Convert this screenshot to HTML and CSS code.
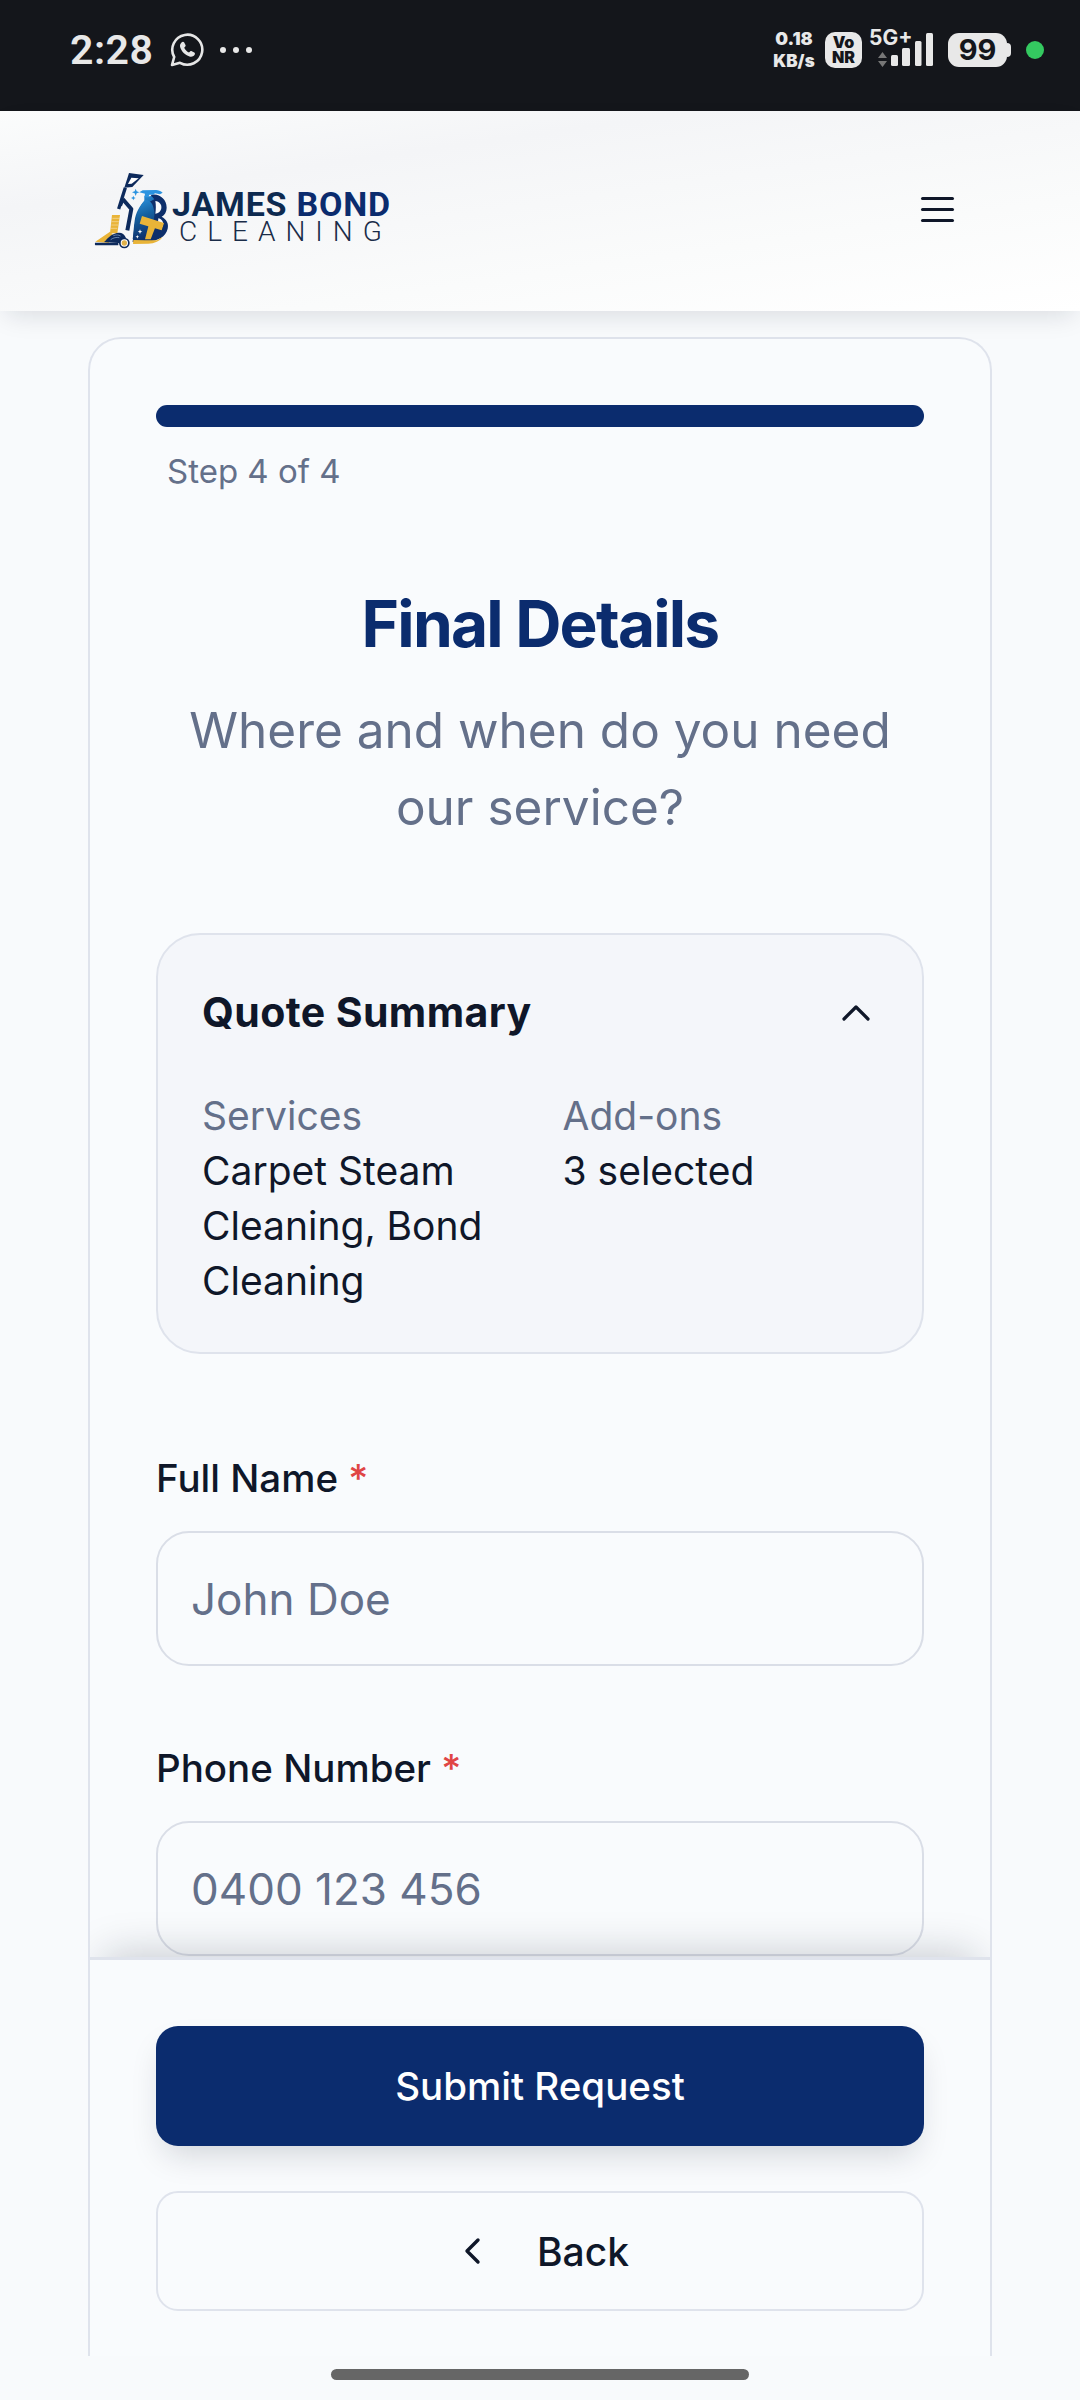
FILE: index.html
```html
<!DOCTYPE html>
<html lang="en">
<head>
<meta charset="utf-8">
<title>James Bond Cleaning - Final Details</title>
<link rel="stylesheet" href="styles.css">
</head>
<body>
<div class="page">
  <div class="status">
    <div class="status-left">
      <span class="time">2:28</span>
      <svg class="wa" viewBox="0 0 34 34"><path d="M2 32l2.2-8A15 15 0 1 1 10 29.8z" fill="none" stroke="#e6e6e6" stroke-width="2.6" stroke-linejoin="round"/><path d="M11.5 9.5c1-1 2.200-.8 2.700 0l1.300 2.500c.3.700.1 1.200-.4 1.800l-.9 1c1 2.100 2.600 3.700 4.800 4.800l1.100-1.100c.5-.5 1.100-.6 1.700-.3l2.500 1.300c.8.500.9 1.500.2 2.500-1.200 1.600-3.100 2-5 1.400-4.400-1.400-8-4.800-9.300-9.200-.5-1.700-.2-3.200 1.300-4.700z" fill="#e6e6e6"/></svg>
      <span class="dots"><i></i><i></i><i></i></span>
    </div>
    <div class="status-right">
      <span class="speed"><b>0.18</b><b>KB/s</b></span>
      <span class="vonr"><b>Vo</b><b>NR</b></span>
      <span class="net">
        <span class="fiveg">5G+</span>
        <svg class="signal" viewBox="0 0 64 40"><path d="M9 28l4.500-6 4.500 6zM9 31l4.500 6 4.500-6z" fill="#777"/><rect x="22" y="25" width="7" height="11" rx="1.500" fill="#e8e8e8"/><rect x="33" y="18" width="8" height="18" rx="1.500" fill="#e8e8e8"/><rect x="46" y="11" width="6.500" height="25" rx="1.500" fill="#e8e8e8"/><rect x="57" y="3" width="7" height="33" rx="1.500" fill="#e8e8e8"/></svg>
      </span>
      <span class="battery"><span class="battery-level">99</span><i class="battery-nub"></i></span>
      <i class="green-dot"></i>
    </div>
  </div>

  <header class="topbar">
    <div class="logo">
      <svg class="logo-mark" viewBox="0 0 255 270">
        <defs>
          <linearGradient id="bottle" x1="0" y1="0" x2="0.2" y2="1">
            <stop offset="0" stop-color="#2b93e0"/>
            <stop offset=".45" stop-color="#15609f"/>
            <stop offset="1" stop-color="#0d2f6b"/>
          </linearGradient>
        </defs>
        <path d="M103 68L117 24 161 30 127 66z" fill="#0d2a5c"/>
        <path d="M124 38L146 40 125 56 114 57z" fill="#fff"/>
        <path d="M106 68L96 100 86 132" fill="none" stroke="#0d2a5c" stroke-width="10"/>
        <path d="M98 102L124 132 112 196" fill="none" stroke="#0d2a5c" stroke-width="12" stroke-linejoin="round"/>
        <path d="M92 122L100 102" fill="none" stroke="#0d2a5c" stroke-width="8"/>
        <path d="M66 150h24l-8 55H60z" fill="#e9b438"/>
        <path d="M67 160h22M65 170h22M64 180h20M62 190h20" stroke="#fff" stroke-width="1.600" opacity=".7"/>
        <path d="M16 230l44-30 8 8-12 26z" fill="#e9b438"/>
        <path d="M42 231c8-6 14-18 30-24 16-7 30-4 36 12l-14 16z" fill="#0d2a5c"/>
        <path d="M62 224c8-6 18-8 26-6M70 212c8-3 16-3 22 1" fill="none" stroke="#8fb0d8" stroke-width="2"/>
        <path d="M15 233h70v8H18c-3 0-4-2-3-8z" fill="#0d2a5c"/>
        <circle cx="103" cy="234" r="16" fill="#0d2a5c"/>
        <circle cx="103" cy="234" r="11" fill="#fff"/>
        <circle cx="103" cy="234" r="8" fill="#dfb14a"/>
        <path d="M184 90c22-6 46 12 46 38 0 12-6 22-15 27 14 8 22 20 18 36-5 24-30 37-58 38l-47 1c2-10 3-22 4-36 2-24 14-48 30-62z" fill="#0d2f6b"/>
        <path d="M163 94h22l8 9c-20 8-34 26-40 50-4 20-8 44-12 62l-13 8c3-20 3-38 6-56 3-24 15-44 29-60z" fill="url(#bottle)"/>
        <path d="M165 105c18 0 24 12 28 34 2 16-3 30-8 45l-16 42-41 4c4-18 3-38 8-60 5-26 14-48 29-65z" fill="url(#bottle)"/>
        <path d="M148 82l10-6 40-1c7 0 14 3 20 8l-8 5-15-3-6 4h-11l-3 8h-12l2-11z" fill="#2b93e0"/>
        <path d="M196 108c12 2 20 10 18 22-2 10-10 16-18 16 2-12 2-26 0-38z" fill="#f8fafc"/>
        <path d="M205 160c9 2 16 10 14 20l-2 6-14-3z" fill="#f8fafc"/>
        <path d="M156 153l66 21-7 22-66-20z" fill="#e9b438"/>
        <path d="M176 181l20 6-14 36h-17z" fill="#e9b438"/>
        <path d="M130 225l35 1h36l16-10c-6 12-24 20-42 20l-46 1z" fill="#e9b438"/>
        <path d="M137 71l3 8 8 3-8 3-3 8-3-8-8-3 8-3zM130 92l2 5 5 2-5 2-2 5-2-5-5-2 5-2z" fill="#2b93e0"/>
        <path d="M150 193l2 5 5 2-5 2-2 5-2-5-5-2 5-2zM142 210l1.500 4 4 1.500-4 1.500-1.500 4-1.500-4-4-1.500 4-1.500z" fill="#fff"/>
      </svg>
      <div class="logo-words">
        <span class="logo-top"><span class="logo-james">JAMES</span> <span class="logo-bond">BOND</span></span>
        <span class="logo-bottom">CLEANING</span>
      </div>
    </div>
    <button class="menu-btn" aria-label="Menu"><i></i><i></i><i></i></button>
  </header>

  <main class="content">
    <section class="card">
      <div class="scroll">
        <div class="progress"></div>
        <p class="step">Step 4 of 4</p>
        <h1 class="title">Final Details</h1>
        <p class="subtitle">Where and when do you need our service?</p>

        <div class="summary">
          <div class="summary-head">
            <h2 class="summary-title">Quote Summary</h2>
            <svg class="chev-up" viewBox="0 0 30 17"><path d="M3 15L15 3l12 12" fill="none" stroke="#0f1729" stroke-width="3.200" stroke-linecap="round" stroke-linejoin="round"/></svg>
          </div>
          <div class="summary-grid">
            <div><div class="muted">Services</div><div>Carpet Steam Cleaning, Bond Cleaning</div></div>
            <div><div class="muted">Add-ons</div><div>3 selected</div></div>
          </div>
        </div>

        <div class="field">
          <label class="label">Full Name <span class="req">*</span></label>
          <div class="input">John Doe</div>
        </div>
        <div class="field">
          <label class="label">Phone Number <span class="req">*</span></label>
          <div class="input">0400 123 456</div>
        </div>
      </div>
      <div class="actions">
        <button class="btn btn-primary">Submit Request</button>
        <button class="btn btn-back">
          <svg class="chev-left" viewBox="0 0 18 28"><path d="M15 3L4 14l11 11" fill="none" stroke="#0f1729" stroke-width="3.400" stroke-linecap="round" stroke-linejoin="round"/></svg>
          Back
        </button>
      </div>
    </section>
  </main>

  <div class="gesture"><i class="home"></i></div>
</div>
</body>
</html>
```

FILE: styles.css
```css
* { box-sizing: border-box; }
html, body { margin: 0; padding: 0; }
body { font-family: "Inter", "Liberation Sans", sans-serif; color: #0f1729; background: #f8fafc; }
.page { width: 1080px; height: 2400px; display: flex; flex-direction: column; overflow: hidden; background: #f8fafc; }

.status { height: 111px; flex: none; background: #14161b; color: #e8e8e8; display: flex; justify-content: space-between; align-items: flex-start; padding: 29px 36px 0 70px; }
.status-left { display: flex; align-items: center; height: 42px; }
.time { font: 600 41px/42px "Roboto", sans-serif; letter-spacing: .5px; width: 100px; }
.wa { width: 34px; height: 34px; }
.dots { display: flex; gap: 7px; margin-left: 16px; }
.dots i { width: 6px; height: 6px; border-radius: 50%; background: #e8e8e8; }
.status-right { display: flex; align-items: center; height: 42px; }
.speed { display: flex; flex-direction: column; align-items: center; font: 700 17px/23px "Inter", sans-serif; width: 44px; }
.speed b:first-child { font-size: 18px; }
.vonr { width: 37px; height: 36px; margin-left: 9px; border-radius: 10px; background: #e8e8e8; color: #14161b; display: flex; flex-direction: column; align-items: center; justify-content: center; font: 700 16px/15px "Inter", sans-serif; }
.net { width: 70px; height: 42px; margin-left: 7px; display: flex; flex-direction: column; }
.fiveg { font: 700 21px/20px "Inter", sans-serif; margin-top: -1px; height: 1px; overflow: visible; }
.signal { width: 64px; height: 40px; margin-top: 1px; margin-left: 0; }
.battery { display: flex; align-items: center; margin-left: 9px; }
.battery-level { width: 59px; height: 34px; border-radius: 11px; background: #e8e8e8; color: #14161b; font: 700 29px/34px "Inter", sans-serif; text-align: center; }
.battery-nub { width: 4px; height: 14px; border-radius: 0 4px 4px 0; background: #e8e8e8; }
.green-dot { width: 18px; height: 18px; margin-left: 15px; border-radius: 50%; background: #34c960; }

.topbar { height: 200px; flex: none; background: linear-gradient(172deg, #fbfcfc 0%, #f4f5f7 28%, #fafbfb 68%, #fff 100%); box-shadow: 0 10px 24px -6px rgba(15, 23, 41, .13); display: flex; align-items: center; justify-content: space-between; padding: 0 126px 0 95px; position: relative; }
.logo { display: flex; align-items: center; margin-top: -2px; }
.logo-mark { width: 85px; height: 90px; margin: 0 -3px 0 -5px; flex: none; }
.logo-words { display: flex; flex-direction: column; position: relative; margin-top: 15px; }
.logo-top { font: 700 34px/28px "Roboto", sans-serif; letter-spacing: .8px; white-space: nowrap; }
.logo-james { color: #0d2a50; }
.logo-bond { color: #0b2c6e; }
.logo-bottom { font: 300 28px/28px "Roboto", sans-serif; letter-spacing: 10px; color: #1a2c48; margin-left: 7px; white-space: nowrap; }
.menu-btn { border: 0; padding: 0; background: none; display: flex; flex-direction: column; gap: 8px; width: 33px; margin-top: -3px; }
.menu-btn i { display: block; height: 3px; border-radius: 2px; background: #0f1729; }

.content { flex: 1; min-height: 0; padding: 26px 88px 0; overflow: hidden; }
.card { height: 100%; border: 2px solid #dfe3ec; border-bottom: 0; border-radius: 33px 33px 0 0; background: #f9fbfd; display: flex; flex-direction: column; overflow: hidden; }
.scroll { flex: 1; min-height: 0; overflow: hidden; padding: 66px 66px 0; }
.progress { height: 22px; border-radius: 11px; background: #0b2c6e; }
.step { margin: 22px 0 0 11px; font-size: 33px; line-height: 44px; color: #64708a; }
.title { margin: 87px 0 0; text-align: center; font: 700 64px/88px "Inter", sans-serif; letter-spacing: -1.800px; color: #0b2c6e; }
.subtitle { margin: 24px 0 0; text-align: center; font-size: 49.500px; line-height: 77px; color: #64708a; }

.summary { margin-top: 87px; height: 421px; border: 2px solid #dfe3ec; border-radius: 44px; background: #f4f6fa; padding: 44px 44px; }
.summary-head { display: flex; justify-content: space-between; align-items: center; height: 66px; }
.summary-title { margin: 0; font: 700 41px/66px "Inter", sans-serif; letter-spacing: .4px; color: #0f1729; }
.chev-up { width: 30px; height: 17px; margin-right: 7px; }
.summary-grid { display: grid; grid-template-columns: 1fr 1fr; gap: 45px; margin-top: 43px; font-size: 39px; line-height: 55px; font-weight: 400; }
.muted { color: #64708a; }

.field { margin-top: 75px; }
.summary + .field { margin-top: 97px; }
.label { display: block; font-size: 38.500px; line-height: 55px; font-weight: 500; }
.req { color: #e04545; }
.input { height: 135px; margin-top: 25px; border: 2px solid #dadee7; border-radius: 33px; background: #f9fbfd; padding: 0 33px; display: flex; align-items: center; font-size: 44px; color: #64708a; }

.actions { flex: none; position: relative; border-top: 3px solid #dfe3ec; background: #f9fbfd; padding: 66px 66px 45px; display: flex; flex-direction: column; gap: 45px; box-shadow: 0 -16px 40px -14px rgba(15, 23, 41, .22); }
.btn { height: 120px; border-radius: 22px; font: 500 38.500px/1 "Inter", sans-serif; display: flex; align-items: center; justify-content: center; }
.btn-primary { border: 0; background: #0b2c6e; color: #fff; box-shadow: 0 16px 32px -8px rgba(15, 23, 41, .17); }
.btn-back { border: 2px solid #dfe3ec; background: #f9fbfd; color: #0f1729; gap: 56px; padding-left: 18px; font-size: 39px; }
.chev-left { width: 18px; height: 28px; }

.gesture { height: 44px; flex: none; display: flex; justify-content: center; padding-top: 13px; background: #f8fafc; }
.home { width: 418px; height: 11px; border-radius: 6px; background: #666; }
```
